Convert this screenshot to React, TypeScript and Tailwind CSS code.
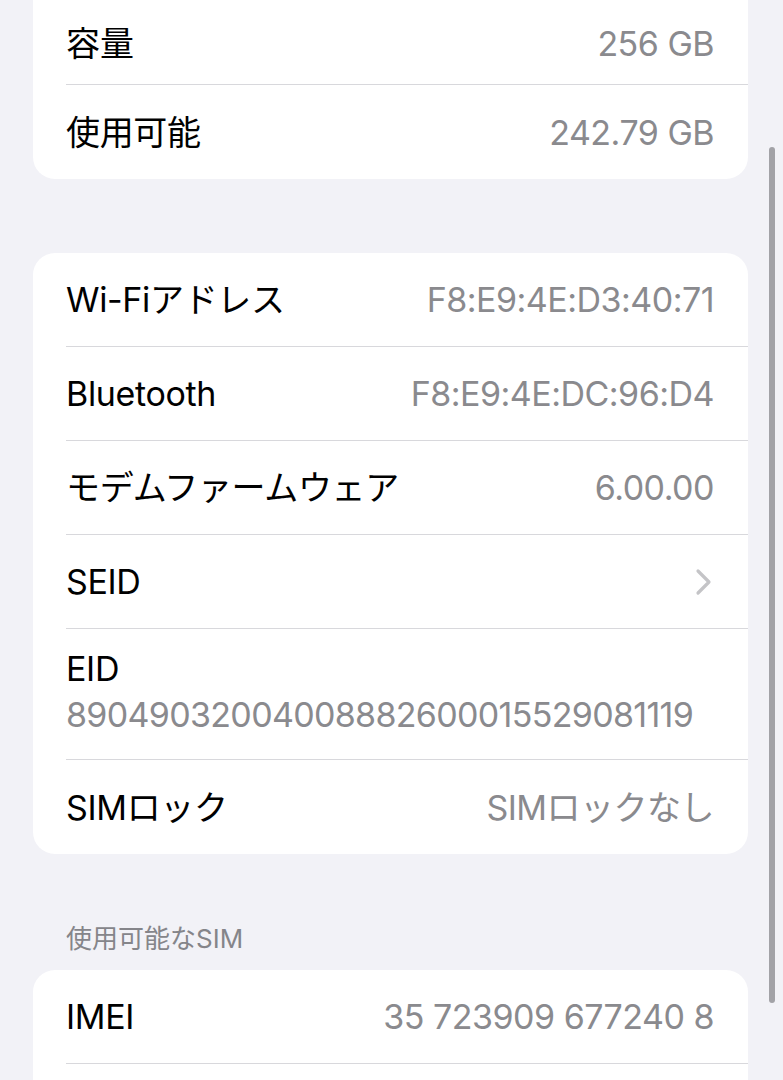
const font = "font-['Inter','Noto_Sans_CJK_JP',sans-serif]"

interface RowProps {
  label: string
  value?: string
  chevron?: boolean
  last?: boolean
}

const Row: React.FC<RowProps> = ({ label, value, chevron, last }) => (
  <div className="pl-[33px]">
    <div
      className={
        "flex h-[94px] items-center justify-between pr-[34px] " +
        (last ? "" : "border-b border-[#d8d8dc]")
      }
    >
      <span className="text-[34px] tracking-[-0.01em] text-black">{label}</span>
      {value && <span className="text-[34px] tracking-[-0.015em] text-[#8a8a8e]">{value}</span>}
      {chevron && (
        <svg width="18" height="28" viewBox="0 0 18 28" className="mr-[1px]">
          <polyline
            points="3,3 14,14 3,25"
            fill="none"
            stroke="#c4c4c7"
            strokeWidth="3.2"
            strokeLinecap="round"
            strokeLinejoin="round"
          />
        </svg>
      )}
    </div>
  </div>
)

export default function App() {
  return (
    <div className={`relative h-[1080px] w-[783px] overflow-hidden bg-[#f2f2f7] ${font}`}>
      {/* storage */}
      <div className="ml-[33px] mr-[35px] rounded-b-[22px] bg-white">
        <div className="pl-[33px]">
          <div className="flex h-[85px] items-center justify-between border-b border-[#d8d8dc] pr-[34px] pt-[2px]">
            <span className="text-[34px] text-black">容量</span>
            <span className="text-[34px] tracking-[-0.015em] text-[#8a8a8e]">256 GB</span>
          </div>
        </div>
        <Row label="使用可能" value="242.79 GB" last />
      </div>

      {/* network */}
      <div className="ml-[33px] mr-[35px] mt-[74px] rounded-[22px] bg-white">
        <Row label="Wi-Fiアドレス" value="F8:E9:4E:D3:40:71" />
        <Row label="Bluetooth" value="F8:E9:4E:DC:96:D4" />
        <Row label="モデムファームウェア" value="6.00.00" />
        <Row label="SEID" chevron />
        <div className="pl-[33px]">
          <div className="flex h-[131px] flex-col justify-center border-b border-[#d8d8dc] pr-[34px] pb-[2px]">
            <span className="text-[34px] leading-[44px] tracking-[-0.01em] text-black">EID</span>
            <span className="text-[34px] leading-[48px] tracking-[-0.02em] text-[#8a8a8e]">
              89049032004008882600015529081119
            </span>
          </div>
        </div>
        <Row label="SIMロック" value="SIMロックなし" last />
      </div>

      {/* sim */}
      <div className="ml-[66px] mt-[70px] text-[26px] leading-[30px] text-[#85858a]">使用可能なSIM</div>
      <div className="ml-[33px] mr-[35px] mt-[16px] rounded-[22px] bg-white">
        <Row label="IMEI" value="35 723909 677240 8" />
        <div className="h-[94px]" />
      </div>

      {/* scroll indicator */}
      <div className="absolute left-[769px] top-[147px] h-[856px] w-[6px] rounded-full bg-[#a2a2a7]" />
    </div>
  )
}
